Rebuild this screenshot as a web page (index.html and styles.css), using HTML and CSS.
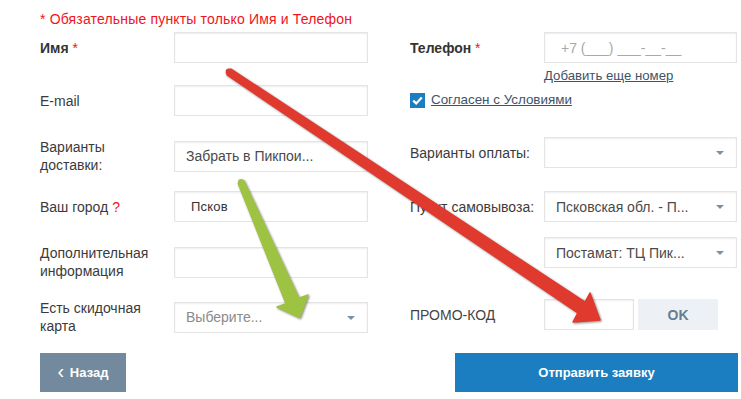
FILE: index.html
```html
<!DOCTYPE html>
<html lang="ru">
<head>
<meta charset="utf-8">
<title>Форма заказа</title>
<link rel="stylesheet" href="styles.css">
</head>
<body>
<div class="page">
  <div class="cols">
    <div class="col col-left">
      <div class="note">* Обязательные пункты только Имя и Телефон</div>
      <div class="row">
        <label class="lbl lbl-bold">Имя <span class="req">*</span></label>
        <div class="field"></div>
      </div>
      <div class="row">
        <label class="lbl">E-mail</label>
        <div class="field"></div>
      </div>
      <div class="row">
        <label class="lbl">Варианты доставки:</label>
        <div class="field select"><span class="val">Забрать в Пикпои...</span></div>
      </div>
      <div class="row">
        <label class="lbl">Ваш город <span class="req">?</span></label>
        <div class="field"><span class="val city">Псков</span></div>
      </div>
      <div class="row">
        <label class="lbl">Дополнительная информация</label>
        <div class="field"></div>
      </div>
      <div class="row row-last">
        <label class="lbl">Есть скидочная карта</label>
        <div class="field select"><span class="val muted">Выберите...</span><span class="caret"></span></div>
      </div>
    </div>
    <div class="col col-right">
      <div class="row row-first-r">
        <label class="lbl lbl-bold">Телефон <span class="req">*</span></label>
        <div class="field"><span class="val ph">+7 (___) ___-__-__</span></div>
      </div>
      <a class="add-link">Добавить еще номер</a>
      <div class="agree">
        <span class="check"><svg width="11" height="9" viewBox="0 0 11 9"><path d="M1.2 4.6 L4.2 7.4 L9.8 1.6" fill="none" stroke="#fff" stroke-width="2.2"/></svg></span>
        <a class="agree-link">Согласен с Условиями</a>
      </div>
      <div class="row r-pay">
        <label class="lbl">Варианты оплаты:</label>
        <div class="field select"><span class="caret"></span></div>
      </div>
      <div class="row r-point">
        <label class="lbl">Пункт самовывоза:</label>
        <div class="field select"><span class="val">Псковская обл. - П...</span><span class="caret"></span></div>
      </div>
      <div class="row r-post">
        <label class="lbl"></label>
        <div class="field select"><span class="val">Постамат: ТЦ Пик...</span><span class="caret"></span></div>
      </div>
      <div class="row r-promo">
        <label class="lbl lbl-up">ПРОМО-КОД</label>
        <div class="promo">
          <div class="field promo-input"></div>
          <button class="btn-ok">OK</button>
        </div>
      </div>
    </div>
  </div>
  <div class="actions">
    <button class="btn-back"><span class="chev">‹</span> Назад</button>
    <button class="btn-send">Отправить заявку</button>
  </div>
</div>
<svg class="arrows" width="741" height="399" viewBox="0 0 741 399">
  <g class="arrow-red">
    <polygon points="230.9,69.1 585.1,302.1 590,293 600,320 573,322 577.9,312.9 227.1,74.9" fill="#e03a2f" stroke="#e03a2f" stroke-width="1.5" stroke-linejoin="round"/>
    <circle cx="229" cy="72" r="3.4" fill="#e03a2f"/>
  </g>
  <g class="arrow-green">
    <polygon points="243.8,180.8 298.9,298.2 308,295 299.6,317.5 277,307 286.1,303.8 238.2,183.2" fill="#9ec343" stroke="#9ec343" stroke-width="1.5" stroke-linejoin="round"/>
    <circle cx="241" cy="182" r="3" fill="#9ec343"/>
  </g>
</svg>
</body>
</html>
```
FILE: styles.css
```css
html, body {
  margin: 0;
  padding: 0;
  background: #fff;
  overflow: hidden;
}
body {
  width: 741px;
  height: 399px;
  position: relative;
  font-family: "Liberation Sans", Arial, sans-serif;
  font-size: 14px;
  color: #3b3b3b;
}
.page {
  padding: 10px 0 0 40px;
}
.cols {
  display: grid;
  grid-template-columns: 328px 327px;
  column-gap: 42px;
}
.col {
  display: flex;
  flex-direction: column;
}
.col-left {
  gap: 22px;
}
.note {
  color: #f0141c;
  line-height: 18px;
  height: 18px;
  white-space: nowrap;
  letter-spacing: 0.17px;
  margin-bottom: -18px;
}
.row {
  display: grid;
  grid-template-columns: 134px 1fr;
  align-items: center;
  height: 31px;
}
.row-last { margin-top: 2px; }
.lbl {
  line-height: 18px;
  max-width: 118px;
  color: #3b3b3b;
}
.col-right .lbl { max-width: 134px; white-space: nowrap; }
.lbl-bold { font-weight: bold; color: #333; }
.lbl-bold .req { font-weight: normal; }
.req { color: #f0141c; }
.field {
  box-sizing: border-box;
  height: 31px;
  border: 1px solid #e4e4e4;
  box-shadow: inset 0 1px 2px rgba(0,0,0,0.07);
  background: #fff;
  display: flex;
  align-items: center;
  padding: 0 11px;
  position: relative;
}
.val { color: #4a4a4a; white-space: nowrap; }
.val.muted { color: #8a8a8a; }
.val.ph { color: #a8a8a8; padding-left: 5px; }
.val.city { font-size: 13px; color: #333; padding-left: 5px; letter-spacing: 0.2px; }
.caret {
  position: absolute;
  right: 12px;
  top: 13px;
  width: 0;
  height: 0;
  border-left: 4px solid transparent;
  border-right: 4px solid transparent;
  border-top: 4px solid #7a91a5;
}
.col-right { gap: 0; }
.row-first-r { margin-top: 22px; }
.add-link {
  margin: 5px 0 0 134px;
  line-height: 16px;
  font-size: 13.2px;
  color: #3e5366;
  text-decoration: underline;
  white-space: nowrap;
}
.agree {
  margin-top: 8px;
  display: flex;
  align-items: center;
  height: 16px;
}
.check {
  width: 15px;
  height: 15px;
  background: #1c7ec0;
  display: flex;
  align-items: center;
  justify-content: center;
  margin-right: 6px;
}
.agree-link {
  color: #3e5366;
  text-decoration: underline;
  line-height: 16px;
  font-size: 13.4px;
}
.r-pay { margin-top: 29px; }
.r-point { margin-top: 23px; }
.r-post { margin-top: 15px; }
.r-promo { margin-top: 31px; }
.lbl-up { color: #444; }
.promo {
  display: flex;
  gap: 4px;
  height: 31px;
}
.promo-input { width: 90px; }
.btn-ok {
  width: 80px;
  height: 31px;
  border: 0;
  background: #edf1f5;
  color: #687d90;
  font-family: inherit;
  font-weight: bold;
  font-size: 14px;
  padding: 0;
}
.actions {
  display: flex;
  justify-content: space-between;
  width: 698px;
  margin-top: 23px;
}
.btn-back, .btn-send {
  height: 39px;
  border: 0;
  color: #fff;
  font-family: inherit;
  font-weight: bold;
  font-size: 13px;
  padding: 0;
}
.btn-back {
  width: 86px;
  background: #738a9e;
}
.chev {
  font-weight: normal;
  font-size: 20px;
  line-height: 0;
  position: relative;
  top: 1px;
  margin-right: 2px;
}
.btn-send {
  width: 283px;
  background: #1a7ec0;
}
.arrows {
  position: absolute;
  left: 0;
  top: 0;
  pointer-events: none;
}
.arrow-red, .arrow-green {
  filter: drop-shadow(1px 1.5px 0.8px rgba(0,0,0,0.45));
}
```
